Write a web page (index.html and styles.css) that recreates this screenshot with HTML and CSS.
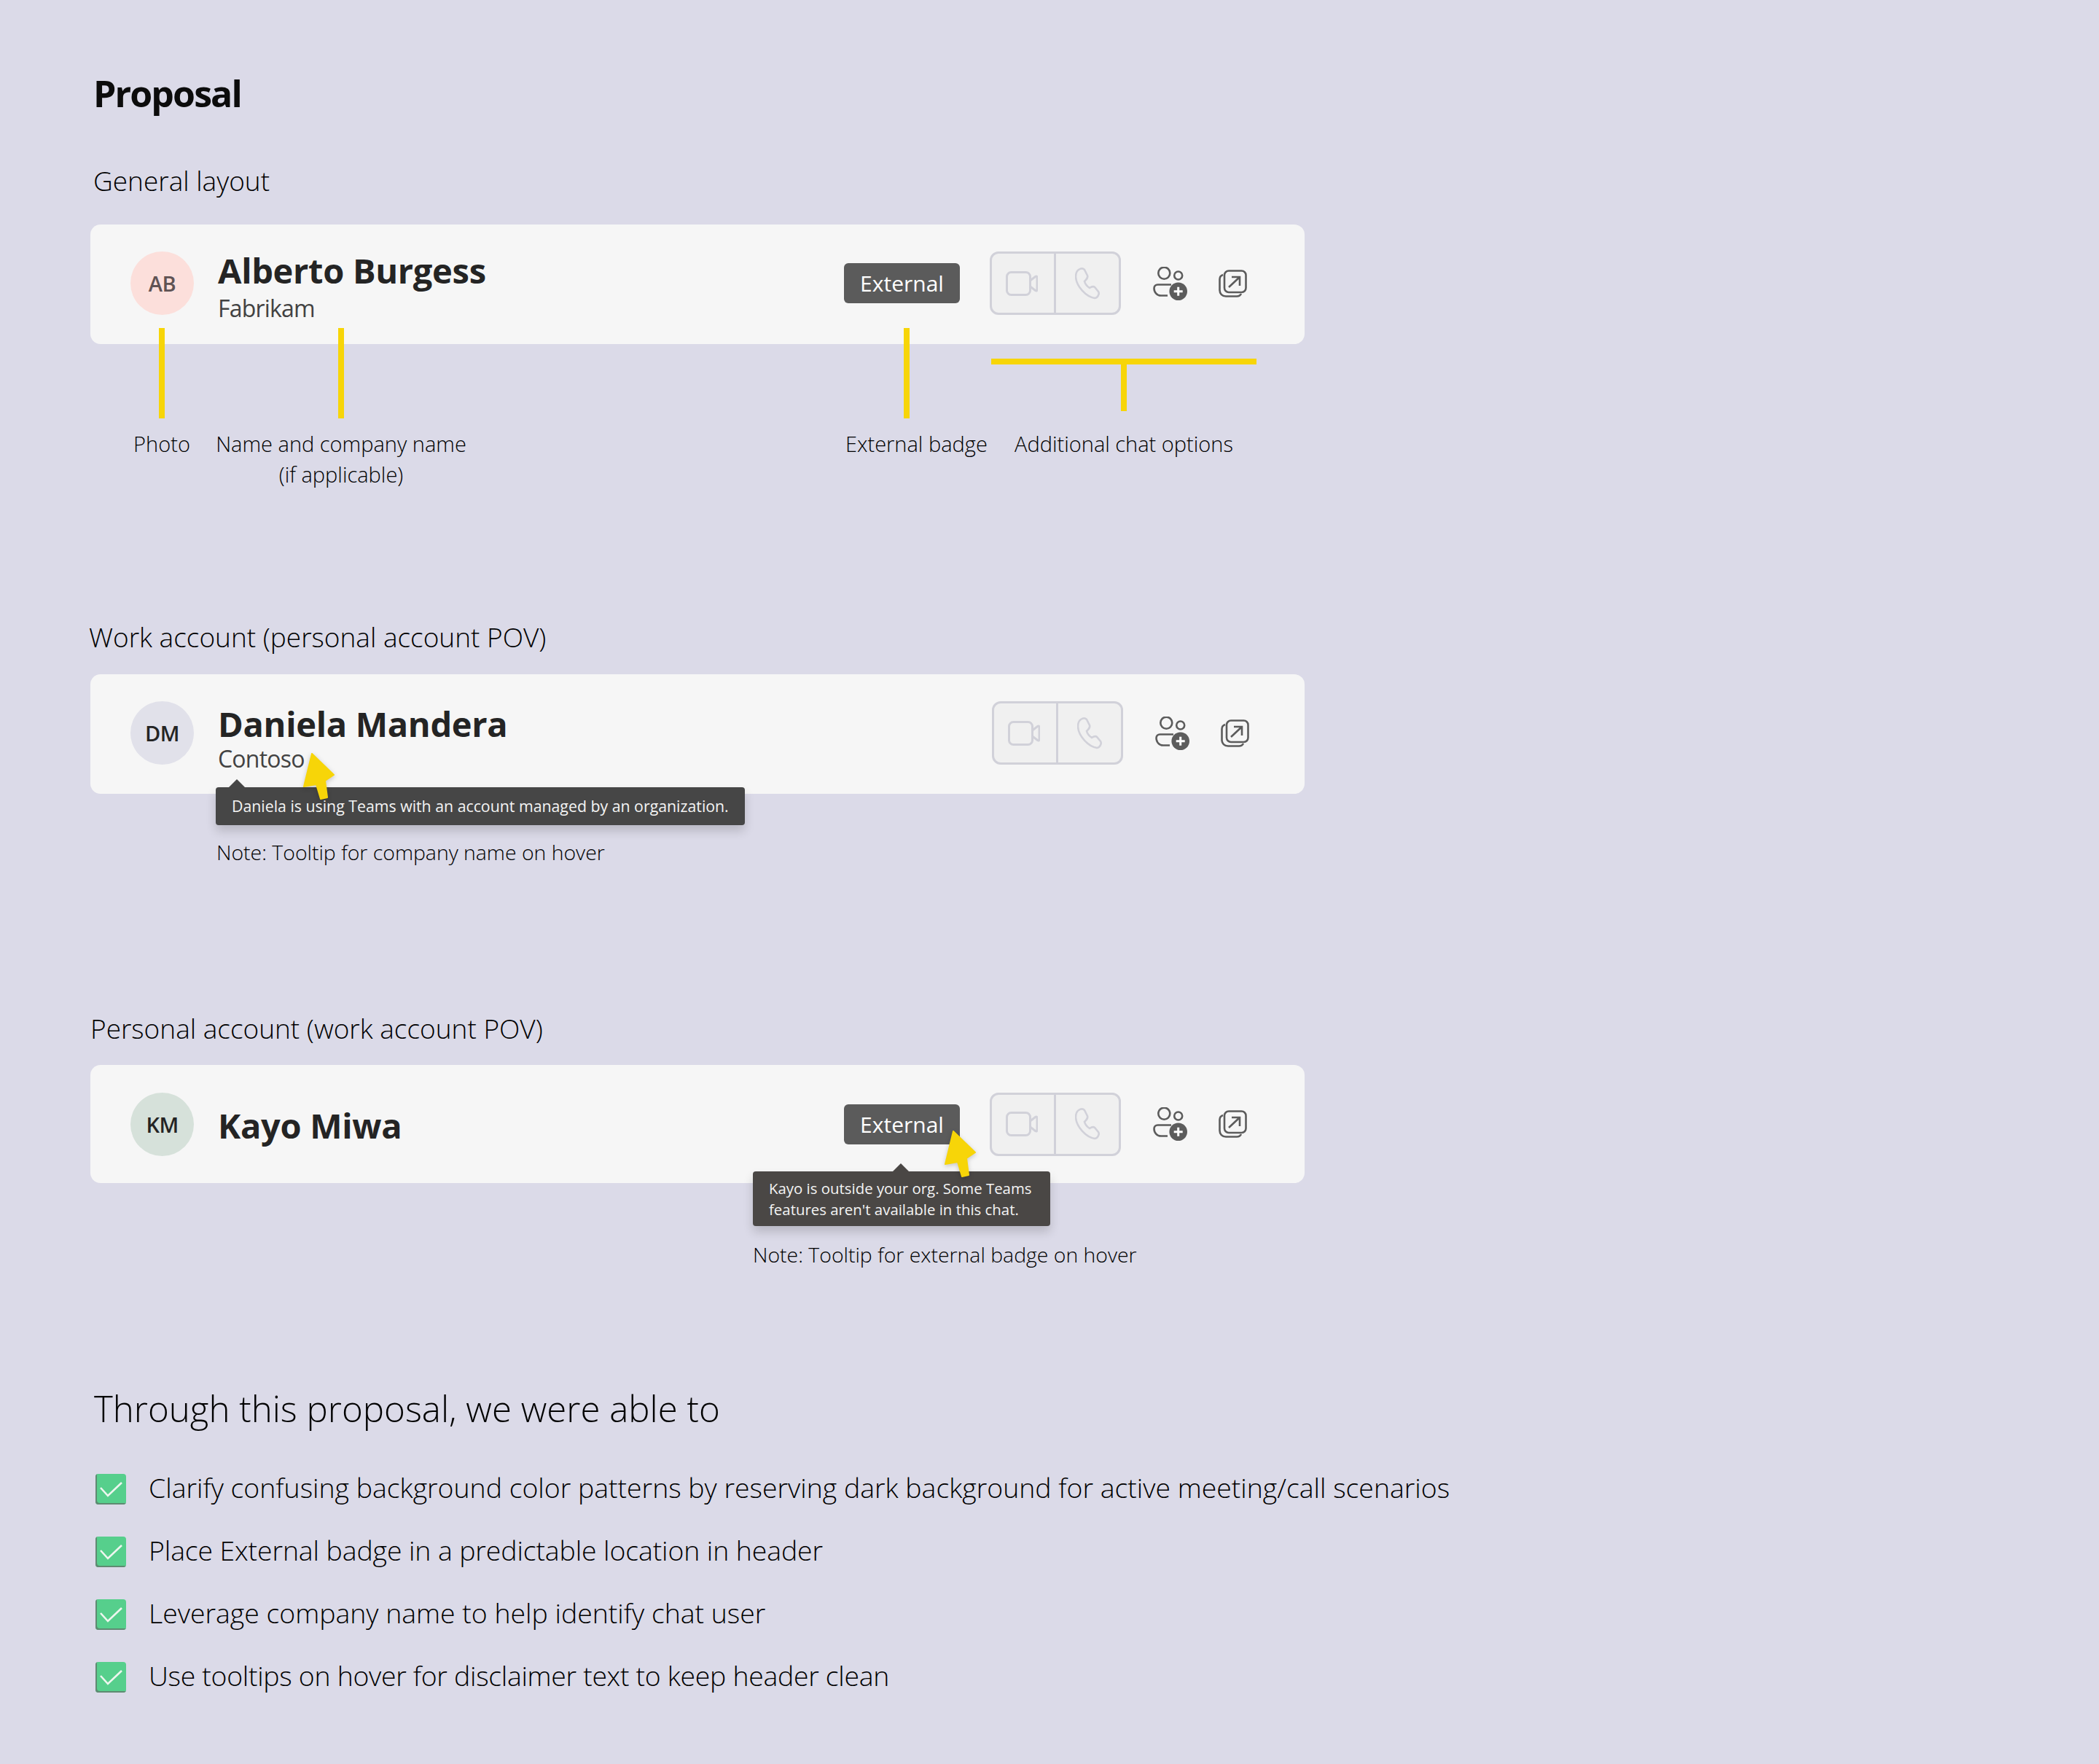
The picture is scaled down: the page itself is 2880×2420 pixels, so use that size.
FILE: index.html
```html
<!DOCTYPE html>
<html lang="en">
<head>
    <meta charset="UTF-8">
    <title>Proposal</title>
    <link rel="stylesheet" href="styles.css">
</head>
<body>
    <svg class="icon-defs" width="0" height="0">
        <defs>
            <symbol id="icon-video" viewBox="0 0 44 34">
                <rect x="1.5" y="1.5" width="32" height="31" rx="6"></rect>
                <path d="M33.5 13l7-5.5q2.5-1.5 2.5 1.5v16q0 3-2.5 1.5l-7-5.5"></path>
            </symbol>
            <symbol id="icon-call" viewBox="0 0 34 44">
                <path d="M5 3C8 1 11 1 13 3L17 11C18 14 16 16 13 19C14 23 17 26 20 28C23 26 25 25 27 27L32 33C34 36 31 42 27 42C15 40 2 26 1 13C1 9 2 5 5 3Z"></path>
            </symbol>
            <symbol id="icon-people" viewBox="0 0 47 46">
                <circle class="line" cx="15.3" cy="8.7" r="8"></circle>
                <circle class="line" cx="34.7" cy="12" r="5.5"></circle>
                <path class="line" d="M25 24.5H6.5C3.5 24.5 1.5 26.5 1.5 29.5C1.5 35 5.5 39.5 11 39.5H20"></path>
                <circle class="solid" cx="34.7" cy="33.7" r="12.3"></circle>
                <path class="plus" d="M34.7 27.7v12M28.7 33.7h12"></path>
            </symbol>
            <symbol id="icon-popout" viewBox="0 0 39 38">
                <rect x="8" y="1.5" width="29.5" height="29.5" rx="6"></rect>
                <path d="M6 7C3 8 1.5 10 1.5 13V28C1.5 33 5 36.5 10 36.5H25C28 36.5 30 35 31 33"></path>
                <path d="M14 24L29 10M18 10H29V22"></path>
            </symbol>
            <symbol id="icon-cursor" viewBox="0 0 46 66">
                <path d="M13 2L43 31L31 39L34 62L25 64L19 44L2 47Z"></path>
            </symbol>
            <symbol id="icon-check" viewBox="0 0 42 42">
                <path d="M7 19L17 30L36 12"></path>
            </symbol>
        </defs>
    </svg>

    <main class="page">
        <h1 class="page-title">Proposal</h1>

        <h2 class="section-title section-general">General layout</h2>
        <div class="chat-header">
            <div class="avatar avatar-ab">AB</div>
            <div class="who">
                <div class="name">Alberto Burgess</div>
                <div class="company">Fabrikam</div>
            </div>
            <div class="badge">External</div>
            <div class="call-group">
                <div class="call-btn"><svg class="icon-video"><use href="#icon-video"></use></svg></div>
                <div class="call-btn"><svg class="icon-call"><use href="#icon-call"></use></svg></div>
            </div>
            <svg class="icon-people"><use href="#icon-people"></use></svg>
            <svg class="icon-popout"><use href="#icon-popout"></use></svg>
        </div>

        <div class="callouts">
            <div class="callout callout-photo">
                <div class="stem"></div>
                <p>Photo</p>
            </div>
            <div class="callout callout-name">
                <div class="stem"></div>
                <p>Name and company name<br>(if applicable)</p>
            </div>
            <div class="callout callout-badge">
                <div class="stem"></div>
                <p>External badge</p>
            </div>
            <div class="callout callout-options">
                <div class="bar"></div>
                <div class="stem"></div>
                <p>Additional chat options</p>
            </div>
        </div>

        <h2 class="section-title section-work">Work account (personal account POV)</h2>
        <div class="chat-header chat-header-nobadge">
            <div class="avatar avatar-dm">DM</div>
            <div class="who">
                <div class="name">Daniela Mandera</div>
                <div class="company">Contoso</div>
            </div>
            <div class="call-group">
                <div class="call-btn"><svg class="icon-video"><use href="#icon-video"></use></svg></div>
                <div class="call-btn"><svg class="icon-call"><use href="#icon-call"></use></svg></div>
            </div>
            <svg class="icon-people"><use href="#icon-people"></use></svg>
            <svg class="icon-popout"><use href="#icon-popout"></use></svg>
            <div class="tooltip tooltip-company">Daniela is using Teams with an account managed by an organization.</div>
            <svg class="cursor cursor-company"><use href="#icon-cursor"></use></svg>
        </div>
        <p class="note note-company">Note: Tooltip for company name on hover</p>

        <h2 class="section-title section-personal">Personal account (work account POV)</h2>
        <div class="chat-header chat-header-short">
            <div class="avatar avatar-km">KM</div>
            <div class="who">
                <div class="name">Kayo Miwa</div>
            </div>
            <div class="badge">External</div>
            <div class="call-group">
                <div class="call-btn"><svg class="icon-video"><use href="#icon-video"></use></svg></div>
                <div class="call-btn"><svg class="icon-call"><use href="#icon-call"></use></svg></div>
            </div>
            <svg class="icon-people"><use href="#icon-people"></use></svg>
            <svg class="icon-popout"><use href="#icon-popout"></use></svg>
            <div class="tooltip tooltip-badge">Kayo is outside your org. Some Teams<br>features aren't available in this chat.</div>
            <svg class="cursor cursor-badge"><use href="#icon-cursor"></use></svg>
        </div>
        <p class="note note-badge">Note: Tooltip for external badge on hover</p>

        <h2 class="summary-title">Through this proposal, we were able to</h2>
        <ul class="summary">
            <li><span class="check"><svg><use href="#icon-check"></use></svg></span>Clarify confusing background color patterns by reserving dark background for active meeting/call scenarios</li>
            <li><span class="check"><svg><use href="#icon-check"></use></svg></span>Place External badge in a predictable location in header</li>
            <li><span class="check"><svg><use href="#icon-check"></use></svg></span>Leverage company name to help identify chat user</li>
            <li><span class="check"><svg><use href="#icon-check"></use></svg></span>Use tooltips on hover for disclaimer text to keep header clean</li>
        </ul>
    </main>
</body>
</html>
```

FILE: styles.css
```css
* { box-sizing: border-box; margin: 0; padding: 0; }
body {
    font-family: 'Open Sans', Arial, sans-serif;
    font-weight: 300;
    background-color: #dbdae8;
    color: #000;
}
.icon-defs {
    position: absolute;
}
.page {
    width: 2880px;
    height: 2420px;
    padding: 98px 0 0 124px;
}
.page-title {
    font-size: 50px;
    line-height: 60px;
    font-weight: 700;
    letter-spacing: -1.9px;
    margin-left: 4px;
    color: #0c0c0c;
}
.section-title {
    font-size: 37px;
    line-height: 50px;
    font-weight: 300;
}
.section-general {
    margin: 65px 0 35px 4px;
}
.section-work {
    margin: 177px 0 26px -2px;
}
.section-personal {
    margin: 196px 0 25px 0;
}

/* chat header card */
.chat-header {
    position: relative;
    display: flex;
    align-items: center;
    width: 1666px;
    height: 164px;
    padding: 0 79px 3px 55px;
    background-color: #f6f6f6;
    border-radius: 14px;
}
.chat-header-nobadge {
    padding-right: 76px;
}
.chat-header-short {
    height: 162px;
    padding-bottom: 0;
}
.avatar {
    width: 87px;
    height: 87px;
    flex-shrink: 0;
    border-radius: 50%;
    display: flex;
    justify-content: center;
    align-items: center;
    font-size: 29px;
    font-weight: 600;
    letter-spacing: -0.5px;
}
.avatar-ab { background-color: #fcdfdb; color: #5f5354; }
.avatar-dm { background-color: #e1e1ea; color: #242424; }
.avatar-km { background-color: #d6e1da; color: #242424; }
.who {
    flex: 1;
    margin-left: 33px;
    min-width: 0;
    padding-top: 10px;
}
.name {
    font-size: 47px;
    line-height: 56px;
    font-weight: 700;
    letter-spacing: -0.3px;
    color: #242424;
}
.company {
    margin-top: 3px;
    font-size: 32px;
    line-height: 42px;
    font-weight: 400;
    letter-spacing: -0.8px;
    color: #424242;
}
.chat-header-nobadge .who {
    padding-top: 17px;
}
.chat-header-nobadge .name {
    line-height: 53px;
}
.chat-header-nobadge .company {
    margin-top: 0;
}
.chat-header-short .who {
    padding-top: 3px;
}
.badge {
    width: 159px;
    height: 55px;
    margin-right: 41px;
    background-color: #5b5b5b;
    border-radius: 6px;
    color: #fff;
    font-size: 30px;
    font-weight: 400;
    line-height: 55px;
    text-align: center;
}
.call-group {
    display: flex;
    width: 180px;
    height: 87px;
    background-color: #f0f0f0;
    border: 3px solid #d1d1d9;
    border-radius: 12px;
}
.call-btn {
    width: 85px;
    flex-shrink: 0;
    display: flex;
    justify-content: center;
    align-items: center;
}
.call-btn + .call-btn {
    flex: 1;
    border-left: 3px solid #d1d1d9;
}
.icon-video { width: 44px; height: 34px; margin-right: 4px; fill: none; stroke: #d1d1d9; stroke-width: 3; }
.icon-call { width: 34px; height: 44px; fill: none; stroke: #d1d1d9; stroke-width: 2.6; }
.icon-people {
    width: 47px;
    height: 46px;
    margin-left: 44px;
}
.line { fill: none; stroke: #5c5c5c; stroke-width: 2.6; }
.solid { fill: #5c5c5c; }
.plus { fill: none; stroke: #fff; stroke-width: 3; }
.icon-popout {
    width: 39px;
    height: 38px;
    margin-left: 43px;
    fill: none;
    stroke: #5c5c5c;
    stroke-width: 2.6;
}

/* callouts under the first card, the stems run up into it */
.callouts {
    position: relative;
    display: flex;
    align-items: flex-start;
    margin-top: -22px;
    font-size: 29px;
    line-height: 42px;
}
.stem {
    width: 8px;
    height: 124px;
    background-color: #f7d508;
}
.callout {
    display: flex;
    flex-direction: column;
    align-items: center;
    text-align: center;
    flex-shrink: 0;
}
.callout p {
    margin-top: 14px;
    white-space: nowrap;
}
.callout-photo { width: 120px; margin-left: 38px; }
.callout-name { width: 360px; margin-left: 6px; }
.callout-badge { width: 193px; margin-left: 512px; align-items: flex-start; }
.callout-badge .stem { margin-left: 80px; }
.callout-options { width: 364px; margin-left: 7px; padding-top: 42px; }
.callout-options .stem { height: 64px; }
.callout-options p { margin-top: 24px; }
.bar {
    width: 364px;
    height: 8px;
    background-color: #f7d508;
}

/* tooltips */
.tooltip {
    position: absolute;
    color: #f4f4f4;
    font-weight: 400;
    white-space: nowrap;
    box-shadow: 0 8px 14px rgba(0, 0, 0, 0.16);
    border-radius: 4px;
}
.tooltip::before {
    content: "";
    position: absolute;
    top: -11px;
    border-left: 12px solid transparent;
    border-right: 12px solid transparent;
    border-bottom: 12px solid #464646;
}
.tooltip-company {
    left: 172px;
    top: 155px;
    width: 726px;
    height: 52px;
    padding-left: 22px;
    font-size: 21.3px;
    line-height: 52px;
    background-color: #464646;
    z-index: 1;
}
.tooltip-company::before { left: 17px; }
.tooltip-badge {
    left: 909px;
    top: 146px;
    width: 408px;
    height: 75px;
    padding: 9px 0 0 22px;
    font-size: 20.4px;
    line-height: 29px;
    background-color: #4a4745;
    z-index: 1;
}
.tooltip-badge::before { left: 191px; border-bottom-color: #4a4745; }
.cursor {
    position: absolute;
    width: 46px;
    height: 66px;
    fill: #f7d508;
    stroke: #f7d508;
    stroke-width: 2;
    stroke-linejoin: round;
    filter: drop-shadow(0 2px 3px rgba(0, 0, 0, 0.2));
    z-index: 2;
}
.cursor-company { left: 291px; top: 107px; }
.cursor-badge { left: 1171px; top: 89px; }

.note {
    font-size: 28.4px;
    line-height: 42px;
}
.note-company {
    margin: 59px 0 0 173px;
}
.note-badge {
    margin: 77px 0 0 909px;
}

/* summary list */
.summary-title {
    font-size: 49.2px;
    line-height: 60px;
    font-weight: 300;
    margin: 160px 0 0 5px;
}
.summary {
    list-style: none;
    margin: 60px 0 0 7px;
}
.summary li {
    display: flex;
    align-items: flex-start;
    height: 42px;
    margin-bottom: 44px;
    font-size: 37.4px;
    line-height: 38px;
    white-space: nowrap;
}
.summary li:nth-child(2) { letter-spacing: -0.1px; }
.summary li:nth-child(4) { letter-spacing: -0.3px; }
.check {
    width: 42px;
    height: 42px;
    margin-right: 31px;
    flex-shrink: 0;
    background-color: #56cf8c;
    border-radius: 4px;
    box-shadow: inset 2px -2px 0 #5f8a72;
}
.check svg {
    display: block;
    width: 42px;
    height: 42px;
    fill: none;
    stroke: #eef6ef;
    stroke-width: 2.6;
}
```
